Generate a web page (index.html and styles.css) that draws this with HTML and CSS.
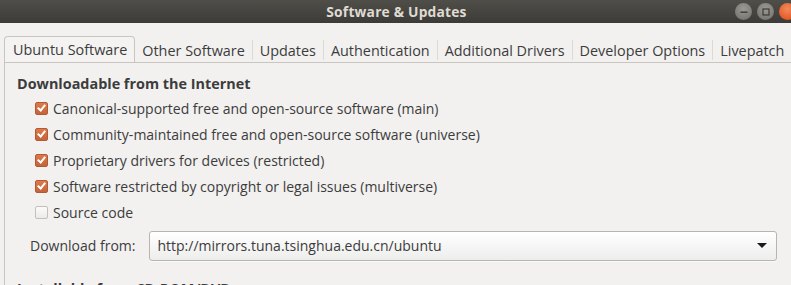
FILE: index.html
```html
<!DOCTYPE html>
<html lang="en">
<head>
  <meta charset="UTF-8">
  <title>Software &amp; Updates</title>
  <link rel="stylesheet" href="styles.css">
</head>
<body>

  <!-- window title bar -->
  <div class="titlebar">
    <span class="title">Software &amp; Updates</span>
    <div class="win-buttons">
      <span class="wbtn min"><svg width="14" height="14" viewBox="0 0 14 14"><rect x="3.5" y="6.5" width="7" height="1.4" fill="#3c3b37"/></svg></span>
      <span class="wbtn max"><svg width="14" height="14" viewBox="0 0 14 14"><rect x="4" y="4" width="6" height="6" fill="none" stroke="#3c3b37" stroke-width="1.2"/></svg></span>
      <span class="wbtn close"></span>
    </div>
  </div>

  <!-- tabs -->
  <div class="tabs">
    <div class="tab active">Ubuntu Software</div>
    <div class="tab">Other Software</div>
    <div class="tab">Updates</div>
    <div class="tab">Authentication</div>
    <div class="tab">Additional Drivers</div>
    <div class="tab">Developer Options</div>
    <div class="tab">Livepatch</div>
  </div>

  <div class="panel">
    <h3>Downloadable from the Internet</h3>
    <div class="options">
      <label class="option"><span class="check on"></span>Canonical-supported free and open-source software (main)</label>
      <label class="option"><span class="check on"></span>Community-maintained free and open-source software (universe)</label>
      <label class="option"><span class="check on"></span>Proprietary drivers for devices (restricted)</label>
      <label class="option"><span class="check on"></span>Software restricted by copyright or legal issues (multiverse)</label>
      <label class="option"><span class="check"></span>Source code</label>
    </div>

    <div class="download-row">
      <span class="dl-label">Download from:</span>
      <div class="combo">
        <span>http://mirrors.tuna.tsinghua.edu.cn/ubuntu</span>
        <span class="arrow"></span>
      </div>
    </div>

    <h3 class="cd">Installable from CD-ROM/DVD</h3>
  </div>

</body>
</html>
```

FILE: styles.css
```css
body {
  margin: 0;
  padding: 0;
  background-color: #f2f1f0;
  font-family: "Open Sans", "DejaVu Sans", sans-serif;
  font-size: 14px;
  color: #3c3c3c;
  overflow: hidden;
  height: 285px;
}

.titlebar {
  height: 23px;
  background: linear-gradient(#4f4e49, #3c3b37);
  position: relative;
  display: flex;
  align-items: center;
  justify-content: center;
}

.title {
  color: #dfdbd2;
  font-weight: bold;
  font-size: 13.8px;
  letter-spacing: 0.2px;
  margin-left: 2px;
}

.win-buttons {
  position: absolute;
  right: -5px;
  top: 3px;
  display: flex;
  gap: 5px;
}

.wbtn {
  width: 17px;
  height: 17px;
  border-radius: 50%;
  display: flex;
  align-items: center;
  justify-content: center;
  background: radial-gradient(circle at 50% 35%, #9c9a94, #6f6d68);
}

.wbtn.close {
  background: radial-gradient(circle at 50% 35%, #f58a5c, #dd4a14);
}

.tabs {
  display: flex;
  margin: 13px 0 0 4px;
  height: 26px;
  align-items: stretch;
  font-size: 14.4px;
  white-space: nowrap;
}

.tab {
  padding: 0 7px;
  display: flex;
  align-items: center;
  white-space: nowrap;
  border-right: 1px solid #dcdad5;
  margin: 4px 0 2px 0;
  flex-shrink: 0;
}

.tab.active {
  margin: 0;
  padding: 0 7px 0 8px;
  border: 1px solid #c9c6c0;
  border-bottom: none;
  border-radius: 4px 4px 0 0;
  background-color: #f4f3f2;
}

.panel {
  border-left: 1px solid #c9c6c0;
  border-top: 1px solid #c9c6c0;
  margin-left: 4px;
  padding: 11px 0 0 12px;
}

.panel h3 {
  margin: 0;
  font-size: 14.4px;
  font-weight: bold;
  color: #3c3c3c;
  line-height: 20px;
  white-space: nowrap;
}

.options {
  display: flex;
  flex-direction: column;
  padding-left: 18px;
  margin-top: 1px;
}

.option {
  display: flex;
  align-items: center;
  height: 26.2px;
  gap: 5px;
  white-space: nowrap;
}

.check {
  width: 11px;
  height: 11px;
  border: 1px solid #c3c0ba;
  border-radius: 2px;
  background: linear-gradient(#fbfbfb, #ebeae8);
  position: relative;
  flex-shrink: 0;
}

.check.on {
  border-color: #b25a33;
  background: linear-gradient(#dc7a4c, #c5633a);
}

.check.on::after {
  content: "";
  position: absolute;
  left: 3px;
  top: 0px;
  width: 3px;
  height: 6px;
  border: solid #fff;
  border-width: 0 2px 2px 0;
  transform: rotate(40deg);
}

.download-row {
  display: flex;
  align-items: center;
  gap: 14px;
  margin: 5px 14px 0 13px;
}

.dl-label {
  white-space: nowrap;
}

.combo {
  flex: 1;
  height: 28px;
  border: 1px solid #b8b5b0;
  border-radius: 3px;
  background: linear-gradient(#ffffff, #ededec);
  display: flex;
  align-items: center;
  justify-content: space-between;
  padding: 0 9px 0 7px;
  box-shadow: 0 1px 0 rgba(255, 255, 255, 0.6);
}

.arrow {
  width: 0;
  height: 0;
  border-left: 5px solid transparent;
  border-right: 5px solid transparent;
  border-top: 5px solid #1a1a1a;
}

.panel h3.cd {
  margin-top: 18px;
}
```
